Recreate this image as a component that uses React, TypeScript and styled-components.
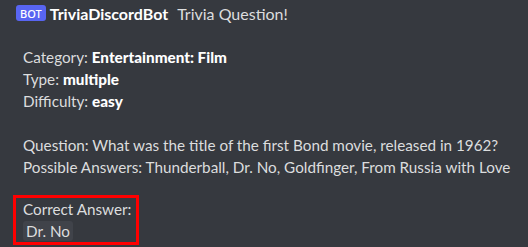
import styled, { createGlobalStyle } from 'styled-components';

const GlobalStyle = createGlobalStyle`
  html, body {
    margin: 0;
    padding: 0;
    background: #36393f;
  }
  body {
    font-family: 'Lato', 'Noto Sans', sans-serif;
    color: #dcddde;
  }
`;

const Message = styled.div`
  width: 528px;
  height: 247px;
  overflow: hidden;
  background: #36393f;
  padding: 2px 0 0 16px;
  box-sizing: border-box;
`;

const Header = styled.div`
  display: flex;
  align-items: center;
  height: 22px;
`;

const BotTag = styled.span`
  display: inline-flex;
  align-items: center;
  justify-content: center;
  height: 16px;
  padding: 0 4px;
  border-radius: 3px;
  background: #5865f2;
  color: #fff;
  font-family: 'Noto Sans', sans-serif;
  font-size: 11px;
  font-weight: 500;
  margin-right: 4px;
`;

const Username = styled.span`
  color: #fff;
  font-size: 16px;
  font-weight: 700;
  margin-right: 9px;
`;

const Title = styled.span`
  color: #dcddde;
  font-size: 16px;
`;

const Body = styled.div`
  padding-left: 7px;
  font-size: 15.25px;
  line-height: 22px;
`;

const Line = styled.div<{ $gap?: number }>`
  height: ${(p) => p.$gap ?? 22}px;
  white-space: nowrap;
`;

const Strong = styled.b`
  color: #fff;
  font-weight: 900;
`;

const Highlight = styled.div`
  box-sizing: border-box;
  margin-left: -10px;
  width: 126px;
  height: 50px;
  padding: 0 0 0 7px;
  border: 3px solid #ff0000;
`;

const Code = styled.span`
  background: #40434a;
  border-radius: 3px;
  padding: 1px 3px;
`;

export default function App() {
  return (
    <>
      <GlobalStyle />
      <Message>
        <Header>
          <BotTag>BOT</BotTag>
          <Username>TriviaDiscordBot</Username>
          <Title>Trivia Question!</Title>
        </Header>
        <Body>
          <Line />
          <Line>
            Category: <Strong>Entertainment: Film</Strong>
          </Line>
          <Line>
            Type: <Strong>multiple</Strong>
          </Line>
          <Line>
            Difficulty: <Strong>easy</Strong>
          </Line>
          <Line />
          <Line>
            Question: What was the title of the first Bond movie, released in 1962?
          </Line>
          <Line>
            Possible Answers: Thunderball, Dr. No, Goldfinger, From Russia with Love
          </Line>
          <Line $gap={17} />
          <Highlight>
            <Line>Correct Answer:</Line>
            <Line>
              <Code>Dr. No</Code>
            </Line>
          </Highlight>
        </Body>
      </Message>
    </>
  );
}
